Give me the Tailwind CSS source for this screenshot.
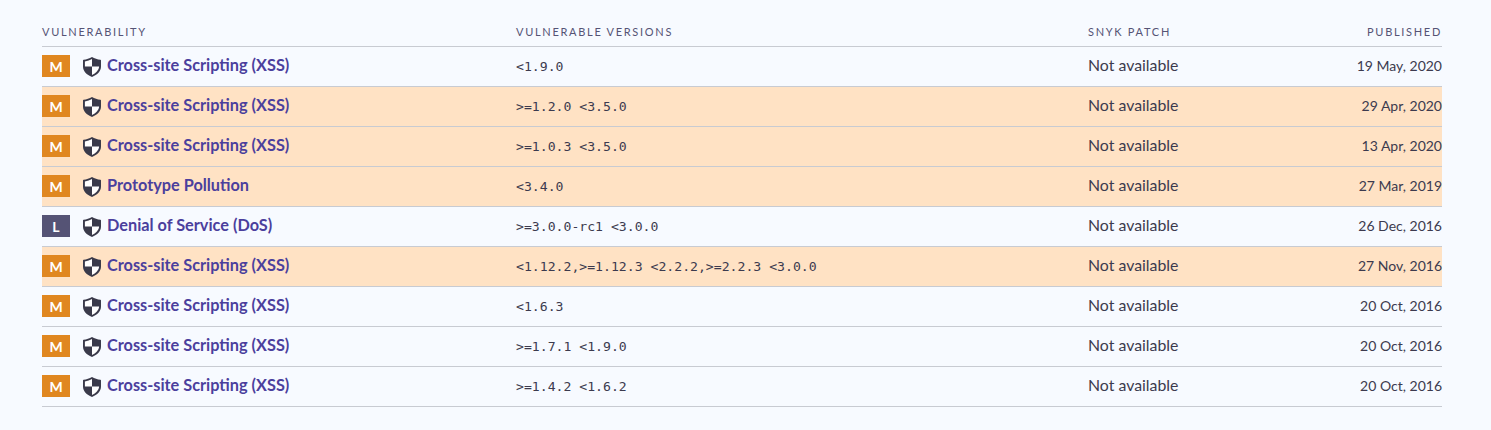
<!DOCTYPE html>
<html lang="en">
<head>
  <meta charset="UTF-8" />
  <title>Known vulnerabilities</title>
  <script src="https://cdn.jsdelivr.net/npm/@tailwindcss/browser@4"></script>
</head>
<body class="bg-[#f7faff] font-['Lato',sans-serif] text-[#3c3a4e]">
  <main class="h-[430px] overflow-hidden px-[42px] pt-[19px] mr-[7px] w-[1484px]">
    <div class="w-[1400px]">
      <!-- Header -->
      <div class="grid grid-cols-[474px_572px_1fr_auto] h-[28px] items-start border-b border-[#c8cbd2] pt-[6px] text-[11px] leading-[14px] tracking-[0.155em] text-[#555375] uppercase">
        <div>Vulnerability</div>
        <div>Vulnerable versions</div>
        <div>Snyk patch</div>
        <div class="text-right">Published</div>
      </div>
      <div id="rows"></div>
    </div>
  </main>

  <script>
    const vulns = [
      { sev: 'M', title: 'Cross-site Scripting (XSS)', versions: '<1.9.0', date: '19 May, 2020', hl: false },
      { sev: 'M', title: 'Cross-site Scripting (XSS)', versions: '>=1.2.0 <3.5.0', date: '29 Apr, 2020', hl: true },
      { sev: 'M', title: 'Cross-site Scripting (XSS)', versions: '>=1.0.3 <3.5.0', date: '13 Apr, 2020', hl: true },
      { sev: 'M', title: 'Prototype Pollution', versions: '<3.4.0', date: '27 Mar, 2019', hl: true },
      { sev: 'L', title: 'Denial of Service (DoS)', versions: '>=3.0.0-rc1 <3.0.0', date: '26 Dec, 2016', hl: false },
      { sev: 'M', title: 'Cross-site Scripting (XSS)', versions: '<1.12.2,>=1.12.3 <2.2.2,>=2.2.3 <3.0.0', date: '27 Nov, 2016', hl: true },
      { sev: 'M', title: 'Cross-site Scripting (XSS)', versions: '<1.6.3', date: '20 Oct, 2016', hl: false },
      { sev: 'M', title: 'Cross-site Scripting (XSS)', versions: '>=1.7.1 <1.9.0', date: '20 Oct, 2016', hl: false },
      { sev: 'M', title: 'Cross-site Scripting (XSS)', versions: '>=1.4.2 <1.6.2', date: '20 Oct, 2016', hl: false }
    ];

    const shield = `<svg viewBox="0 0 18 21" preserveAspectRatio="none" class="w-[18px] h-[20px] shrink-0" aria-hidden="true">
      <path fill="#3a3a4a" d="M9 0 C6.5 1.6 3.5 2.6 0.6 2.9 C0.2 3 0 3.3 0 3.7 V10 C0 15 3.6 18.8 9 21 C14.4 18.8 18 15 18 10 V3.7 C18 3.3 17.8 3 17.4 2.9 C14.5 2.6 11.5 1.6 9 0 Z"/>
      <path fill="#fff" d="M9 2.1 C7 3.3 4.4 4.2 1.9 4.6 V10 H9 Z M9 10 V18.8 C12.9 17 15.8 14 16.1 10 Z"/>
    </svg>`;

    const esc = s => s.replace(/</g, '&lt;').replace(/>/g, '&gt;');

    document.getElementById('rows').innerHTML = vulns.map(v => `
      <div class="grid grid-cols-[474px_572px_1fr_auto] h-[40px] items-center border-b border-[#c8cbd2] ${v.hl ? 'bg-[#ffe2c4]' : ''}">
        <div class="flex items-center mb-[1px]">
          <span class="w-[28px] h-[22px] flex items-center justify-center text-white text-[14px] font-bold ${v.sev === 'M' ? 'bg-[#e08720]' : 'bg-[#555375]'}">${v.sev}</span>
          <span class="ml-[13px] mr-[6px] mt-[2px] flex">${shield}</span>
          <a href="#" class="block pb-[2px] text-[16.3px] font-bold text-[#4b3f9d]">${v.title}</a>
        </div>
        <code class="font-['DejaVu_Sans_Mono',monospace] text-[13.15px]">${esc(v.versions)}</code>
        <div class="pb-[4px] text-[15.85px]">Not available</div>
        <div class="pb-[2px] text-[14px] text-right">${v.date}</div>
      </div>`).join('');
  </script>
</body>
</html>
